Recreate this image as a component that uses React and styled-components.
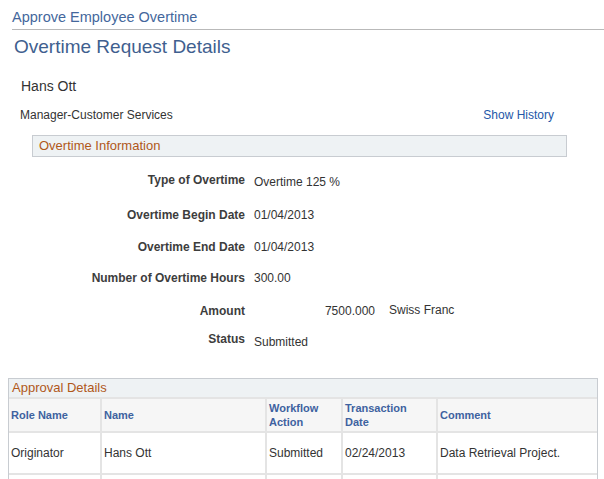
import React from "react";
import styled, { createGlobalStyle } from "styled-components";

const Global = createGlobalStyle`
  html, body { margin: 0; padding: 0; background: #fff; }
  body { font-family: "Liberation Sans", Arial, sans-serif; color: #333; }
`;

const Page = styled.div`
  width: 604px;
  height: 479px;
  overflow: hidden;
  position: relative;
`;

const PageTitle = styled.div`
  margin-left: 12px;
  height: 30px;
  box-sizing: border-box;
  border-bottom: 1px solid #b9b9b9;
  padding-top: 10px;
  font-size: 14.5px;
  line-height: 15px;
  color: #44679c;
`;

const Heading = styled.h1`
  margin: 6px 0 0 14px;
  font-size: 19px;
  line-height: 22px;
  font-weight: normal;
  color: #3f5f8f;
`;

const PersonName = styled.div`
  margin: 20px 0 0 21px;
  font-size: 14px;
  line-height: 16px;
  color: #333;
`;

const InfoRow = styled.div`
  display: flex;
  justify-content: space-between;
  align-items: baseline;
  margin: 14px 50px 0 20px;
  font-size: 12px;
  line-height: 14px;
`;

const Link = styled.a`
  color: #2457a8;
  text-decoration: none;
  cursor: pointer;
`;

const SectionBar = styled.div`
  margin: 13px 37px 0 32px;
  height: 22px;
  box-sizing: border-box;
  background: #eef2f4;
  border: 1px solid #c8ccd1;
  padding: 2px 0 0 6px;
  font-size: 13px;
  line-height: 16px;
  color: #b0581a;
`;

const Fields = styled.div`
  display: flex;
  flex-direction: column;
`;

const FieldRow = styled.div`
  display: grid;
  grid-template-columns: 245px auto;
  column-gap: 9px;
  align-items: baseline;
  margin-top: ${(p) => p.$top}px;
  font-size: 12px;
  line-height: 14px;
`;

const Label = styled.div`
  text-align: right;
  font-weight: bold;
  color: #3d3d3d;
`;

const Value = styled.div`
  color: #333;
  position: relative;
  top: ${(p) => p.$shift || 0}px;
  display: flex;
  align-items: baseline;
`;

const AmountNum = styled.span`
  width: 121px;
  text-align: right;
`;

const Currency = styled.span`
  margin-left: 14px;
  position: relative;
  top: -1px;
`;

const Grid = styled.div`
  margin: 32px 0 0 8px;
  width: 590px;
  box-sizing: border-box;
  border: 1px solid #c8ccd1;
  border-bottom: none;
`;

const GridTitle = styled.div`
  height: 18px;
  background: #eef2f4;
  padding-left: 3px;
  font-size: 13px;
  line-height: 18px;
  color: #b0581a;
`;

const Table = styled.table`
  border-collapse: collapse;
  width: 100%;
  table-layout: fixed;
`;

const Col = styled.col`
  width: ${(p) => (p.$w ? `${p.$w}px` : "auto")};
`;

const Th = styled.th`
  background: #f6f6f6;
  border-top: 2px solid #e4e4e4;
  border-bottom: 2px solid #e4e4e4;
  border-left: 2px solid #e4e4e4;
  &:first-child { border-left: none; }
  height: 32px;
  padding: 0 0 0 2px;
  text-align: left;
  vertical-align: middle;
  font-size: 11px;
  line-height: 14px;
  font-weight: bold;
  color: #3e62a0;
`;

const Td = styled.td`
  border-left: 2px solid #e4e4e4;
  border-bottom: 2px solid #e4e4e4;
  &:first-child { border-left: none; }
  height: 40px;
  padding: 0 0 0 2px;
  font-size: 12px;
  color: #333;
  vertical-align: middle;
  white-space: nowrap;
  overflow: hidden;
`;

const fields = [
  { label: "Type of Overtime", value: "Overtime 125 %", top: 16, shift: 2 },
  { label: "Overtime Begin Date", value: "01/04/2013", top: 21 },
  { label: "Overtime End Date", value: "01/04/2013", top: 18 },
  { label: "Number of Overtime Hours", value: "300.00", top: 17 },
];

export default function App() {
  return (
    <Page>
      <Global />
      <PageTitle>Approve Employee Overtime</PageTitle>
      <Heading>Overtime Request Details</Heading>
      <PersonName>Hans Ott</PersonName>
      <InfoRow>
        <span>Manager-Customer Services</span>
        <Link>Show History</Link>
      </InfoRow>
      <SectionBar>Overtime Information</SectionBar>
      <Fields>
        {fields.map((f) => (
          <FieldRow key={f.label} $top={f.top}>
            <Label>{f.label}</Label>
            <Value $shift={f.shift}>{f.value}</Value>
          </FieldRow>
        ))}
        <FieldRow $top={19}>
          <Label>Amount</Label>
          <Value>
            <AmountNum>7500.000</AmountNum>
            <Currency>Swiss Franc</Currency>
          </Value>
        </FieldRow>
        <FieldRow $top={14}>
          <Label>Status</Label>
          <Value $shift={3}>Submitted</Value>
        </FieldRow>
      </Fields>
      <Grid>
        <GridTitle>Approval Details</GridTitle>
        <Table>
          <colgroup>
            <Col $w={92} />
            <Col $w={165} />
            <Col $w={76} />
            <Col $w={95} />
            <Col />
          </colgroup>
          <thead>
            <tr>
              <Th>Role Name</Th>
              <Th>Name</Th>
              <Th>Workflow<br />Action</Th>
              <Th>Transaction<br />Date</Th>
              <Th>Comment</Th>
            </tr>
          </thead>
          <tbody>
            <tr>
              <Td>Originator</Td>
              <Td>Hans Ott</Td>
              <Td>Submitted</Td>
              <Td>02/24/2013</Td>
              <Td>Data Retrieval Project.</Td>
            </tr>
            <tr>
              <Td></Td>
              <Td></Td>
              <Td></Td>
              <Td></Td>
              <Td></Td>
            </tr>
          </tbody>
        </Table>
      </Grid>
    </Page>
  );
}
